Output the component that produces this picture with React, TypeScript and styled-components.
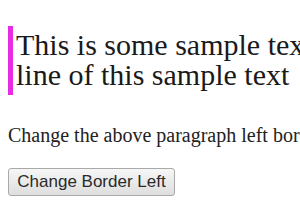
import React from 'react'
import styled, { createGlobalStyle } from 'styled-components'

const GlobalStyle = createGlobalStyle`
  html, body {
    margin: 0;
    padding: 0;
    background: #ffffff;
    overflow: hidden;
  }

  body {
    width: 300px;
    height: 210px;
  }
`

const Page = styled.div`
  padding: 26px 0 0 8px;
  width: 600px;
  font-family: 'Liberation Serif', 'Times New Roman', serif;
  color: #1a1a1a;
`

const Sample = styled.div`
  border-left: 5px solid #e62ae6;
  padding: 4px 0 5px 3px;
  font-size: 30px;
  line-height: 30px;
  white-space: nowrap;
`

const Hint = styled.p`
  margin: 29px 0 0;
  font-size: 20px;
  line-height: 22px;
  white-space: nowrap;
  color: #222;
`

const ChangeButton = styled.button`
  display: block;
  margin-top: 22px;
  height: 28px;
  width: 167px;
  padding: 0;
  font-family: 'Liberation Sans', Arial, sans-serif;
  font-size: 17px;
  color: #2a2a2a;
  background: linear-gradient(#f6f6f6, #dedede);
  border: 1px solid #a9a9a9;
  border-radius: 3px;
`

export default function App() {
  return (
    <>
      <GlobalStyle />
      <Page>
        <Sample>
          This is some sample text, this is the first
          <br />
          line of this sample text
        </Sample>
        <Hint>Change the above paragraph left border color:</Hint>
        <ChangeButton>Change Border Left</ChangeButton>
      </Page>
    </>
  )
}
